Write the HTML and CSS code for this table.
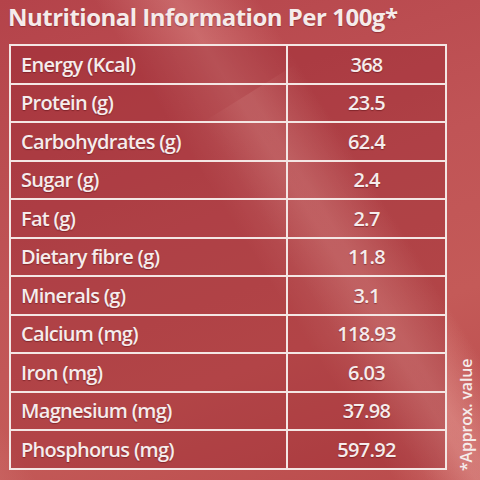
FILE: index.html
```html
<!DOCTYPE html>
<html lang="en">
<head>
    <meta charset="UTF-8">
    <meta name="viewport" content="width=device-width, initial-scale=1.0">
    <title>Nutritional Information</title>
    <link rel="stylesheet" href="styles.css">
</head>
<body>

    <div class="pack">
        <!-- Light folds of the pouch -->
        <div class="fold fold-a"></div>
        <div class="fold fold-b"></div>
        <div class="fold fold-c"></div>

        <div class="panel">
            <h1 class="title">Nutritional Information Per 100g*</h1>

            <table class="facts">
                <tr><td class="name">Energy (Kcal)</td><td class="value">368</td></tr>
                <tr><td class="name">Protein (g)</td><td class="value">23.5</td></tr>
                <tr><td class="name">Carbohydrates (g)</td><td class="value">62.4</td></tr>
                <tr><td class="name">Sugar (g)</td><td class="value">2.4</td></tr>
                <tr><td class="name">Fat (g)</td><td class="value">2.7</td></tr>
                <tr><td class="name">Dietary fibre (g)</td><td class="value">11.8</td></tr>
                <tr><td class="name">Minerals (g)</td><td class="value">3.1</td></tr>
                <tr><td class="name">Calcium (mg)</td><td class="value">118.93</td></tr>
                <tr><td class="name">Iron (mg)</td><td class="value">6.03</td></tr>
                <tr><td class="name">Magnesium (mg)</td><td class="value">37.98</td></tr>
                <tr><td class="name">Phosphorus (mg)</td><td class="value">597.92</td></tr>
            </table>
        </div>

        <div class="note">*Approx. value</div>
    </div>

</body>
</html>
```

FILE: styles.css
```css
body {
    margin: 0;
    font-family: "Open Sans", Arial, sans-serif;
    background-color: #bf4f4e;
}

.pack {
    position: relative;
    width: 480px;
    height: 480px;
    overflow: hidden;
    background: linear-gradient(160deg, #b4434a 0%, #c05456 45%, #c45a58 70%, #b94a4b 100%);
}

/* Soft diagonal highlights */
.fold {
    position: absolute;
    width: 140px;
    height: 700px;
    background: linear-gradient(90deg, rgba(255, 200, 190, 0) 0%, rgba(255, 200, 190, 0.26) 50%, rgba(255, 200, 190, 0) 100%);
    transform: rotate(-32deg);
}

.fold-a {
    left: 250px;
    top: -120px;
}

.fold-b {
    left: 380px;
    top: 40px;
    width: 110px;
    opacity: 0.8;
}

.fold-c {
    left: -60px;
    top: 150px;
    width: 100px;
    opacity: 0.5;
}

.panel {
    position: relative;
    padding: 2px 0 0 8px;
}

.title {
    margin: 0 0 13px 0;
    font-size: 24px;
    font-weight: 700;
    letter-spacing: -0.5px;
    color: #f5ebea;
    line-height: 29px;
    text-shadow: 0 1px 1px rgba(90, 10, 15, 0.4);
}

.facts {
    width: 438px;
    margin-left: 1px;
    border-collapse: collapse;
    border: 2px solid #f4e6e4;
    color: #f6ecec;
}

.facts td {
    height: 36.5px;
    padding: 0;
    border: 2px solid #f4e6e4;
    background-color: rgba(135, 20, 32, 0.3);
    font-size: 20px;
    font-weight: 600;
    letter-spacing: -0.7px;
    text-shadow: 0 1px 1px rgba(80, 10, 15, 0.45);
}

.facts .name {
    width: 265px;
    padding-left: 10px;
}

.facts .value {
    text-align: center;
}

.note {
    position: absolute;
    left: 455px;
    top: 471px;
    transform: rotate(-90deg);
    transform-origin: 0 0;
    white-space: nowrap;
    font-size: 16px;
    font-weight: 600;
    letter-spacing: -0.2px;
    color: #f5ebea;
}
```
